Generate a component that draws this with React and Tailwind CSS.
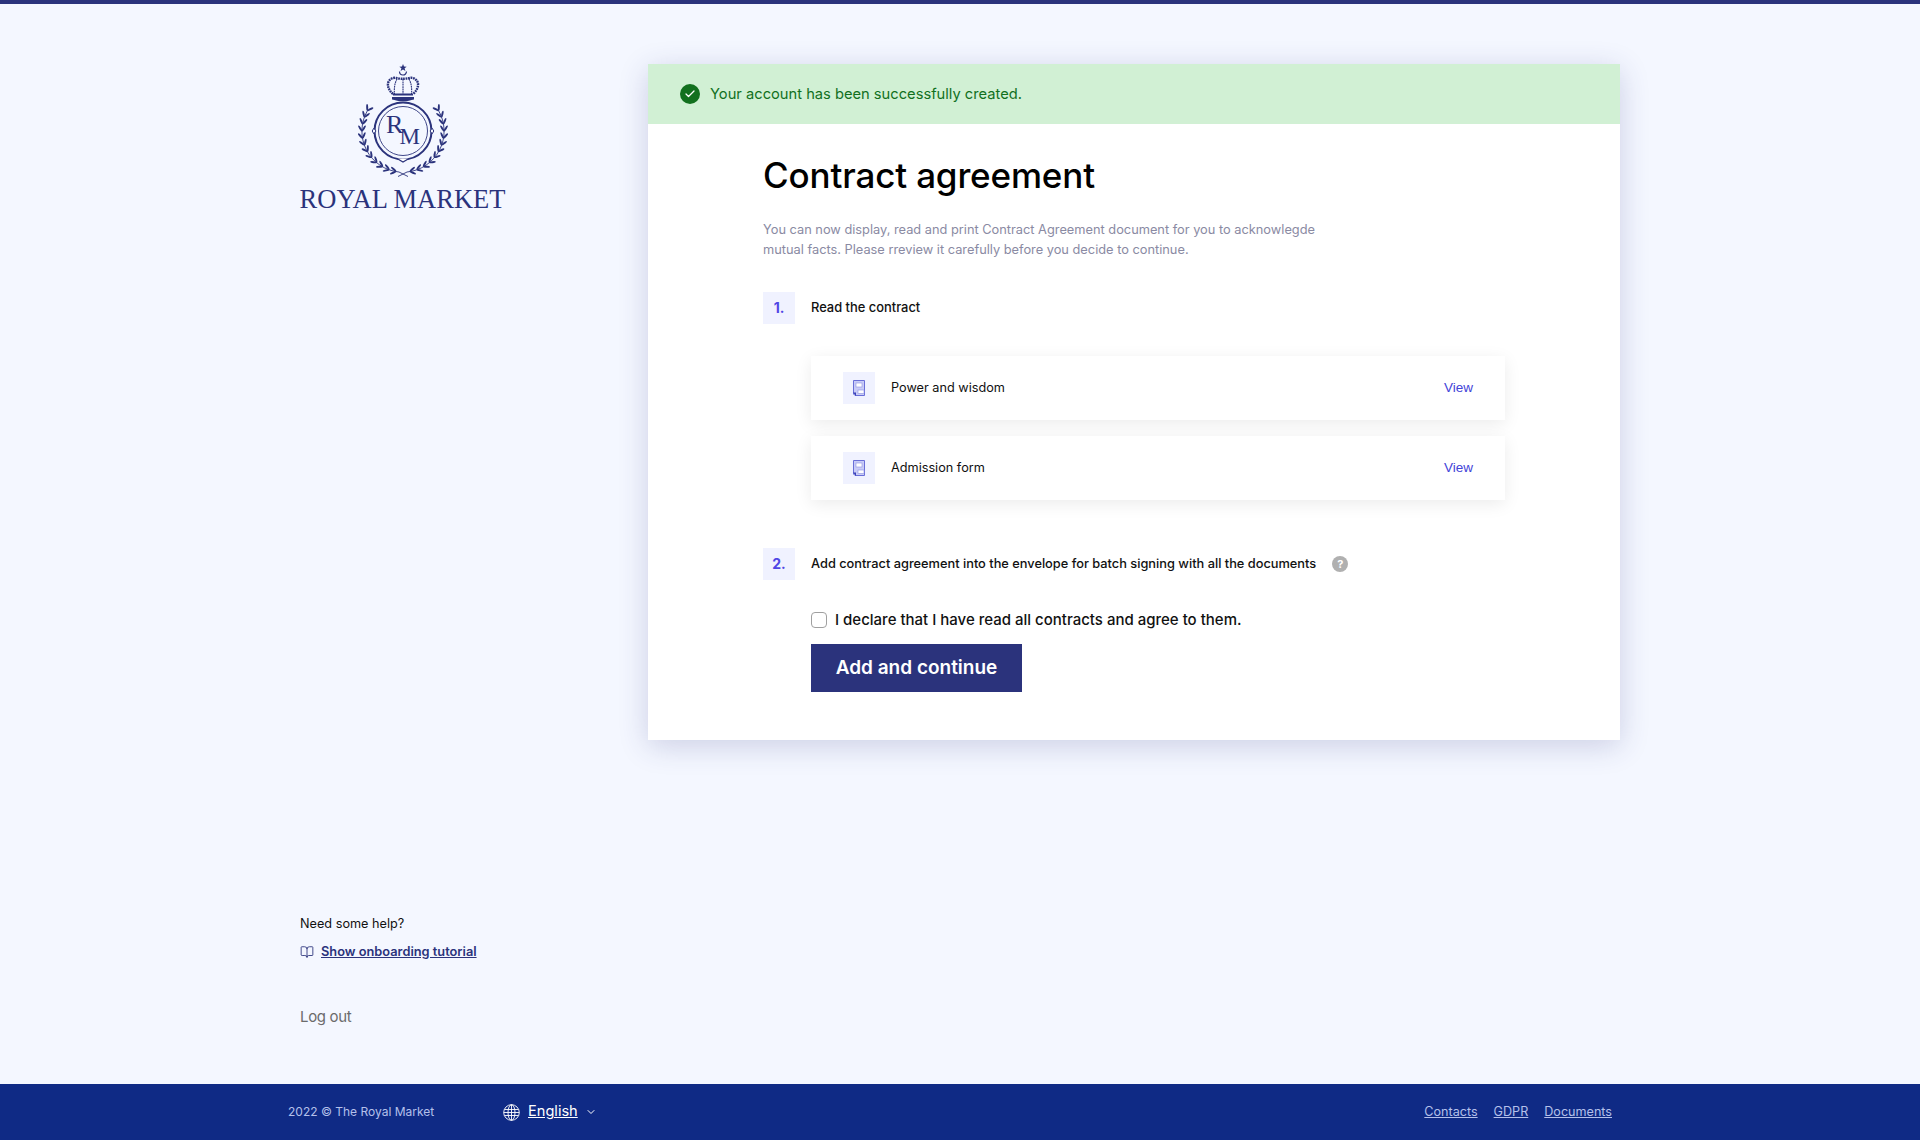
import { BookOpen, Check, ChevronDown } from "lucide-react"

const font = { fontFamily: "Inter, 'Open Sans', sans-serif" }
const navy = "#2b337c"

function Wreath() {
  const items = []
  for (let i = 0; i < 12; i++) {
    // walk down the left side of the ring, from the top left to the bottom
    const deg = 150 + i * 10
    const rad = (deg * Math.PI) / 180
    items.push({ x: 55 + 41 * Math.cos(rad), y: 71 - 41 * Math.sin(rad), tangent: 90 - deg, key: i })
  }
  return (
    <g fill={navy}>
      {items.map(({ x, y, tangent, key }) => (
        <g key={key} transform={`translate(${x} ${y}) rotate(${tangent})`}>
          <ellipse cx="2.500" cy="-1.800" rx="3.400" ry="1" transform="rotate(-32 2.500 -1.800)" />
          <ellipse cx="2.500" cy="1.800" rx="3.400" ry="1" transform="rotate(32 2.500 1.800)" />
        </g>
      ))}
      <path d="M19.500 50.500A41 41 0 0 0 51 112l9 4.500" stroke={navy} strokeWidth="0.900" fill="none" />
    </g>
  )
}

function Logo() {
  return (
    <svg width="110" height="125" viewBox="0 0 110 125" fill="none">
      {/* crown */}
      <path d="M55 4l1 2.600 2.700.1-2.100 1.600.8 2.600-2.400-1.500-2.400 1.500.8-2.600-2.100-1.600 2.700-.1z" fill={navy} />
      <path d="M51.500 11.500a3.500 3.500 0 0 0 7 0" stroke={navy} strokeWidth="1.200" />
      <path d="M45 34c-3.500-3-5.500-7-5-10.500.5-4 5-6.500 8.500-5.500 2.500.6 5 .8 6.500.8s4-.2 6.500-.8c3.500-1 8 1.500 8.500 5.500.5 3.500-1.500 7.500-5 10.500" stroke={navy} strokeWidth="2.400" strokeDasharray="1.800 .7" />
      <path d="M55 19v15M49 19c-2.500 4.500-3 10-2.500 15M61 19c2.500 4.500 3 10 2.500 15" stroke={navy} strokeWidth="1.100" strokeDasharray="1.800 .6" />
      <path d="M45 33.500h20v2H45z" fill={navy} />
      <path d="M44 37h22v2.500c-3 .8-7 1.800-11 1.800s-8-1-11-1.800z" fill={navy} />
      {/* ring */}
      <circle cx="55" cy="71" r="28.500" stroke={navy} strokeWidth="2" />
      <circle cx="55" cy="71" r="24.500" stroke={navy} strokeWidth="0.900" />
      <path d="M28 71l-2.200-2.800-1.600 2.800 1.600 2.800zM82 71l2.200-2.800 1.600 2.800-1.600 2.800z" fill="#f4f7ff" stroke={navy} strokeWidth="1" />
      <path d="M49 98.500l6 3.500 6-3.500" fill="#fff" stroke={navy} strokeWidth="1.200" />
      <text x="38" y="73" fontFamily="'Liberation Serif', serif" fontSize="26" fill={navy}>R</text>
      <text x="51.500" y="84" fontFamily="'Liberation Serif', serif" fontSize="23" fill={navy}>M</text>
      {/* wreath */}
      <Wreath />
      <g transform="translate(110 0) scale(-1 1)">
        <Wreath />
      </g>
    </svg>
  )
}

function PdfIcon() {
  return (
    <svg width="12" height="16" viewBox="0 0 12 16" fill="none">
      <path d="M.5.500h11v15H2L.5 14z" fill="#c9ccf7" stroke="#6a6fd8" />
      <rect x="3" y="3" width="6" height="4" fill="#fff" stroke="#8d91e3" strokeWidth=".6" />
      <rect x="5" y="10" width="6" height="3.500" fill="#fff" stroke="#8d91e3" strokeWidth=".6" />
      <path d="M0 12.500h3V16z" fill="#3c42b8" />
    </svg>
  )
}

function GlobeIcon() {
  return (
    <svg width="17" height="17" viewBox="0 0 17 17" fill="none" stroke="#fff" strokeWidth="0.900">
      <circle cx="8.500" cy="8.500" r="7.800" />
      <ellipse cx="8.500" cy="8.500" rx="3.500" ry="7.800" />
      <path d="M8.500.7v15.600M1.400 5.500h14.200M.7 8.500h15.600M1.400 11.500h14.200" />
    </svg>
  )
}

function StepNumber({ children }) {
  return (
    <div className="w-8 h-8 bg-[#f0f2ff] flex items-center justify-center text-[#4f46e5] text-sm font-bold shrink-0">
      {children}
    </div>
  )
}

function DocRow({ name }) {
  return (
    <div className="h-16 bg-white shadow-[0_4px_16px_rgba(0,0,0,0.08)] flex items-center pl-8 pr-8">
      <div className="w-8 h-8 bg-[#f0f2ff] flex items-center justify-center">
        <PdfIcon />
      </div>
      <span className="ml-4 text-[12.700px] text-[#111]">{name}</span>
      <a className="ml-auto text-[13.500px] text-[#4343d8]" style={{ fontFamily: "'Liberation Sans', sans-serif" }}>View</a>
    </div>
  )
}

export default function App() {
  return (
    <div className="min-h-screen flex flex-col bg-[#f4f7ff] border-t-4 border-[#2b337c]" style={font}>
      <div className="h-[1080px] flex flex-col">
        <main className="flex-1 flex pl-[300px]">
          <aside className="w-[348px] flex flex-col">
            <div className="w-[205px] flex flex-col items-center pt-[56px]">
              <Logo />
              <div className="text-[26.500px] leading-none text-[#2b337c] mt-[1px] whitespace-nowrap" style={{ fontFamily: "'Liberation Serif', serif" }}>
                ROYAL MARKET
              </div>
            </div>
            <div className="mt-auto pb-[55px]">
              <p className="text-[12.700px] leading-5 text-[#111]">Need some help?</p>
              <div className="flex items-center mt-2">
                <BookOpen className="w-[14px] h-[14px] text-[#2b337c]" strokeWidth={1.5} />
                <a className="ml-[7px] text-[12.800px] leading-5 font-semibold text-[#2b337c] underline">Show onboarding tutorial</a>
              </div>
              <p className="mt-[43px] text-[15px] tracking-[-0.33px] leading-6 text-[#6b6b6b]">Log out</p>
            </div>
          </aside>

          <section className="w-[972px] self-start mt-[60px] bg-white shadow-[0_6px_28px_rgba(43,51,124,0.2)]">
            <div className="h-[60px] bg-[#d1f0d4] flex items-center pl-8">
              <div className="w-5 h-5 rounded-full bg-[#12701e] flex items-center justify-center">
                <Check className="w-3 h-3 text-white" strokeWidth={2.5} />
              </div>
              <span className="ml-[10px] text-[14.700px] text-[#12701e]">Your account has been successfully created.</span>
            </div>

            <div className="px-[115px] pt-[29px] pb-12">
              <h1 className="text-[35px] tracking-[-0.15px] leading-[44px] font-medium text-black">Contract agreement</h1>
              <p className="mt-[23px] w-[570px] text-[12.800px] leading-5 text-[#8a8aa3]">
                You can now display, read and print Contract Agreement document for you to acknowlegde mutual facts. Please rreview it carefully before you decide to continue.
              </p>

              <div className="mt-[32px] flex items-center gap-4">
                <StepNumber>1.</StepNumber>
                <span className="text-[12.900px] font-medium text-[#111]">Read the contract</span>
              </div>

              <div className="mt-8 ml-12 flex flex-col gap-4">
                <DocRow name="Power and wisdom" />
                <DocRow name="Admission form" />
              </div>

              <div className="mt-12 flex items-center gap-4">
                <StepNumber>2.</StepNumber>
                <span className="text-[12.800px] font-medium text-[#111]">Add contract agreement into the envelope for batch signing with all the documents</span>
                <div className="w-4 h-4 rounded-full bg-[#b0b0b0] flex items-center justify-center text-white text-[11px] font-bold">?</div>
              </div>

              <div className="mt-8 ml-12">
                <label className="flex items-center h-4">
                  <span className="w-4 h-4 bg-white border border-[#a0a0a0] rounded-[4px]" />
                  <span className="ml-2 text-[15px] font-medium text-[#111]">I declare that I have read all contracts and agree to them.</span>
                </label>
                <button className="mt-4 w-[211px] h-12 bg-[#2b337c] text-white text-[19px] font-semibold">Add and continue</button>
              </div>
            </div>
          </section>
        </main>
      </div>

      <footer className="h-14 bg-[#0f2a85] flex items-center pl-[288px] pr-[308px] text-[12.600px] text-[#b4c0ea]">
        <span className="w-[215px] text-[12px]">2022 © The Royal Market</span>
        <GlobeIcon />
        <a className="ml-2 text-[14.600px] text-white underline">English</a>
        <ChevronDown className="ml-[7px] w-3 h-3 text-white" />
        <div className="ml-auto flex gap-4">
          <a className="underline">Contacts</a>
          <a className="underline">GDPR</a>
          <a className="underline">Documents</a>
        </div>
      </footer>
    </div>
  )
}
